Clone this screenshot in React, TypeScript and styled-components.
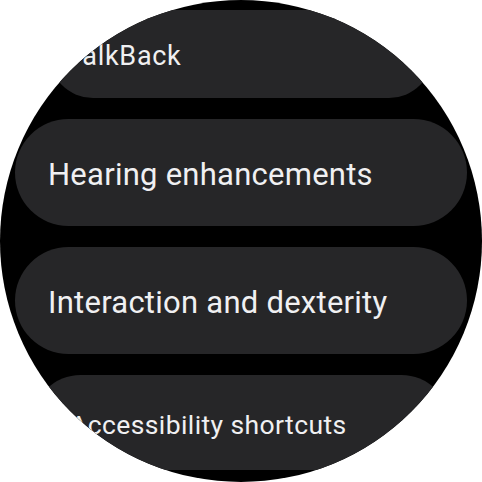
import React from "react";
import styled, { createGlobalStyle } from "styled-components";

const Global = createGlobalStyle`
  html, body {
    margin: 0;
    padding: 0;
    background: #ffffff;
  }
  * { box-sizing: border-box; }
`;

const Screen = styled.div`
  width: 482px;
  height: 482px;
  border-radius: 50%;
  background: #000000;
  overflow: hidden;
`;

const List = styled.div`
  display: flex;
  flex-direction: column;
  align-items: center;
  gap: 21px;
  padding-top: 10px;
`;

const Card = styled.div<{ $w: number; $h: number; $pad: number }>`
  flex: none;
  width: ${(p) => p.$w}px;
  height: ${(p) => p.$h}px;
  border-radius: ${(p) => p.$h / 2}px;
  background: #262628;
  display: flex;
  align-items: center;
  padding: 3px 0 0 ${(p) => p.$pad}px;
`;

const Label = styled.span<{ $size: number; $ls: number }>`
  font-family: Roboto, "Noto Sans", sans-serif;
  font-size: ${(p) => p.$size}px;
  letter-spacing: ${(p) => p.$ls}px;
  color: #f0f0f2;
  white-space: nowrap;
`;

const items = [
  { label: "TalkBack", w: 384, h: 88, pad: 18, size: 27, ls: 0.7 },
  { label: "Hearing enhancements", w: 452, h: 107, pad: 33, size: 31, ls: 0.25 },
  { label: "Interaction and dexterity", w: 452, h: 107, pad: 33, size: 31, ls: 0.25 },
  { label: "Accessibility shortcuts", w: 416, h: 95, pad: 37, size: 26.5, ls: 0.4 },
];

export default function App() {
  return (
    <>
      <Global />
      <Screen>
        <List>
          {items.map((it) => (
            <Card key={it.label} $w={it.w} $h={it.h} $pad={it.pad}>
              <Label $size={it.size} $ls={it.ls}>
                {it.label}
              </Label>
            </Card>
          ))}
        </List>
      </Screen>
    </>
  );
}
